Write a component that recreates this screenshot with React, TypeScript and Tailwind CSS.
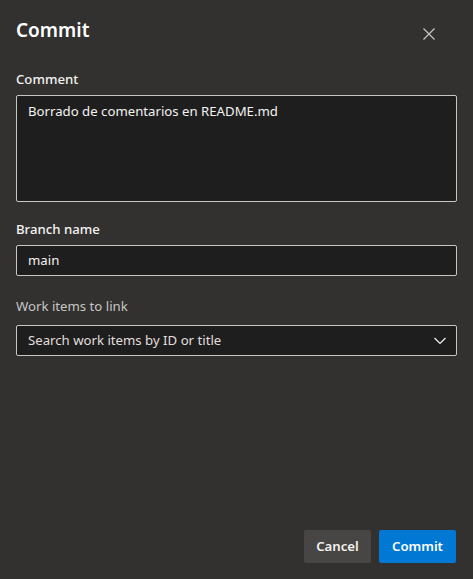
import React from "react";

export default function App() {
  return (
    <div
      className="w-[473px] h-[579px] bg-[#323130] text-white flex flex-col px-4 pb-4"
      style={{ fontFamily: '"Segoe UI", "Noto Sans", "Open Sans", sans-serif' }}
    >
      <div className="flex items-center justify-between pt-[15px] h-[45px]">
        <h1 className="text-[19px] font-semibold leading-[28px]">Commit</h1>
        <button className="w-[32px] h-[32px] mr-[12px] mt-[8px] flex items-center justify-center text-[#c8c6c4]">
          <svg width="12" height="12" viewBox="0 0 12 12" fill="none">
            <path d="M0.5 0.5 L11.5 11.5 M11.5 0.5 L0.5 11.5" stroke="currentColor" strokeWidth="1.2" />
          </svg>
        </button>
      </div>

      <label className="mt-[24px] text-[13.2px] font-medium leading-[20px] text-[#f3f2f1]">Comment</label>
      <div className="mt-[6px] h-[107px] bg-[#1f1e1e] border border-[#c8c6c4] rounded-[2px] px-[11px] py-[5px] text-[13.2px] leading-[20px] text-[#f3f2f1]">
        Borrado de comentarios en README.md
      </div>

      <label className="mt-[17px] text-[13.2px] font-medium leading-[20px] text-[#f3f2f1]">Branch name</label>
      <div className="mt-[6px] h-[31px] bg-[#1f1e1e] border border-[#c8c6c4] rounded-[2px] px-[11px] flex items-center text-[13.2px] text-[#f3f2f1]">
        main
      </div>

      <label className="mt-[20px] text-[13.2px] leading-[20px] text-[#c8c6c4]">Work items to link</label>
      <div className="mt-[9px] h-[31px] bg-[#1f1e1e] border border-[#c8c6c4] rounded-[2px] pl-[11px] pr-[10px] flex items-center justify-between text-[13.2px] text-[#e1dfdd]">
        <span>Search work items by ID or title</span>
        <svg width="12" height="8" viewBox="0 0 12 8" fill="none">
          <path d="M0.5 1 L6 6.5 L11.5 1" stroke="#f3f2f1" strokeWidth="1.2" />
        </svg>
      </div>

      <div className="mt-auto mr-[1px] flex justify-end gap-[8px]">
        <button className="h-[33px] w-[67px] bg-[#484644] rounded-[2px] text-[13.2px] font-semibold text-[#f3f2f1]">Cancel</button>
        <button className="h-[33px] w-[77px] bg-[#0078d4] rounded-[2px] text-[13.2px] font-semibold text-white">Commit</button>
      </div>
    </div>
  );
}
